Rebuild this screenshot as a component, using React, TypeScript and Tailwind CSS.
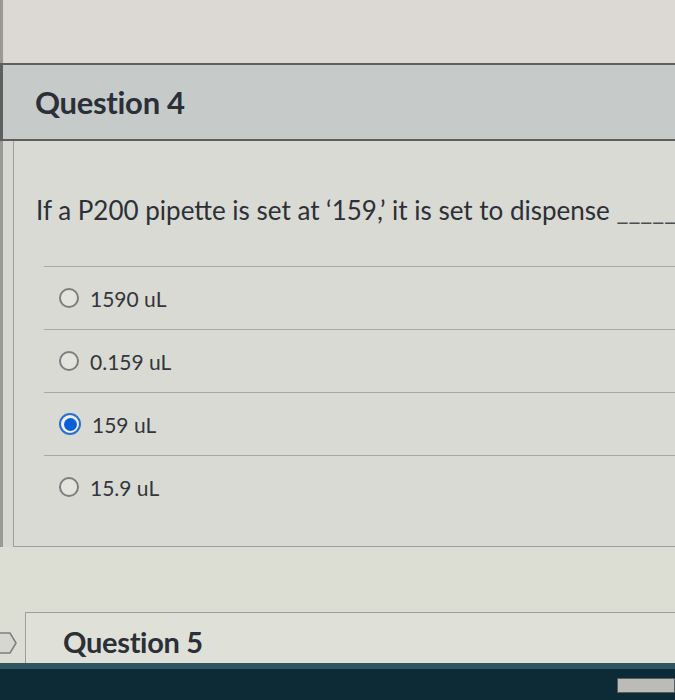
import React from "react";

type Answer = { id: string; label: string; selected?: boolean };

const answers: Answer[] = [
  { id: "a1", label: "1590 uL" },
  { id: "a2", label: "0.159 uL" },
  { id: "a3", label: "159 uL", selected: true },
  { id: "a4", label: "15.9 uL" }
];

function Radio({ selected }: { selected?: boolean }) {
  if (selected) {
    return (
      <span className="flex h-[22px] w-[22px] shrink-0 items-center justify-center rounded-full border-2 border-[#2a6fd0] bg-[#eef2f6]">
        <span className="h-[13px] w-[13px] rounded-full bg-[#0b5fd8]" />
      </span>
    );
  }
  return <span className="h-[20px] w-[20px] shrink-0 rounded-full border-2 border-[#7d7f7f] bg-[#e4e4df]" />;
}

function FlagIcon() {
  return (
    <svg width="18" height="24" viewBox="0 0 18 24" className="shrink-0">
      <path d="M-2 2 H10 L16 12 L10 22 H-2" fill="#d6d7d0" stroke="#7c807f" strokeWidth="1.5" strokeLinejoin="round" />
    </svg>
  );
}

export default function App() {
  return (
    <div className="flex h-[700px] w-[675px] flex-col overflow-hidden bg-[#d9d7d2] font-['Lato','Open_Sans',sans-serif] text-[#30343b]">
      {/* page above the question */}
      <div className="h-[63px] shrink-0 border-l-[3px] border-[#9a9996] bg-[#dcd9d5]" />

      {/* question header */}
      <div className="flex h-[78px] shrink-0 items-center border-y-2 border-l-[3px] border-[#5d5f60] bg-[#c6cac8] pl-[32px]">
        <h2 className="text-[31px] font-bold leading-none tracking-[-0.3px] text-[#2b2f37]">Question 4</h2>
      </div>

      {/* question body */}
      <div className="h-[406px] shrink-0 border-l-[3px] border-[#9a9996] bg-[#d7d8d1]">
        <div className="h-full ml-[10px] border-b border-l border-[#9c9e9a] bg-[#d9dad3]">
          <p className="whitespace-nowrap pl-[22px] pt-[54px] text-[26px] leading-[30px] text-[#2c3037]">
            If a P200 pipette is set at ‘159,’ it is set to dispense <span className="text-[#4a4d52]">_____</span>
          </p>

          <div className="ml-[30px] mt-[41px]">
            {answers.map((answer) => (
              <div key={answer.id} className="flex h-[63px] items-center gap-[11px] border-t border-[#a7a9a4] pl-[15px]">
                <Radio selected={answer.selected} />
                <span className="text-[21px] leading-none text-[#33363c]">{answer.label}</span>
              </div>
            ))}
          </div>
        </div>
      </div>

      {/* gap between questions */}
      <div className="h-[65px] shrink-0 bg-[#dcddd3]" />

      {/* next question header */}
      <div className="flex h-[51px] shrink-0 items-start bg-[#dcddd3]">
        <div className="flex w-[25px] shrink-0 pt-[19px]">
          <FlagIcon />
        </div>
        <div className="flex h-full flex-1 items-center border-l border-t border-[#9c9e9a] bg-[#dfe0d7] pl-[37px] pt-[6px]">
          <h2 className="text-[29px] font-bold leading-none tracking-[-0.3px] text-[#2b2f37]">Question 5</h2>
        </div>
      </div>

      {/* taskbar */}
      <div className="flex flex-1 flex-col bg-[#0d2b37]">
        <div className="h-[6px] bg-[#2f5462]" />
        <div className="flex flex-1 items-start justify-end pt-[9px]">
          <div className="h-[15px] w-[58px] border border-[#5a5d5e] bg-[#bbbcb8]" />
        </div>
      </div>
    </div>
  );
}
